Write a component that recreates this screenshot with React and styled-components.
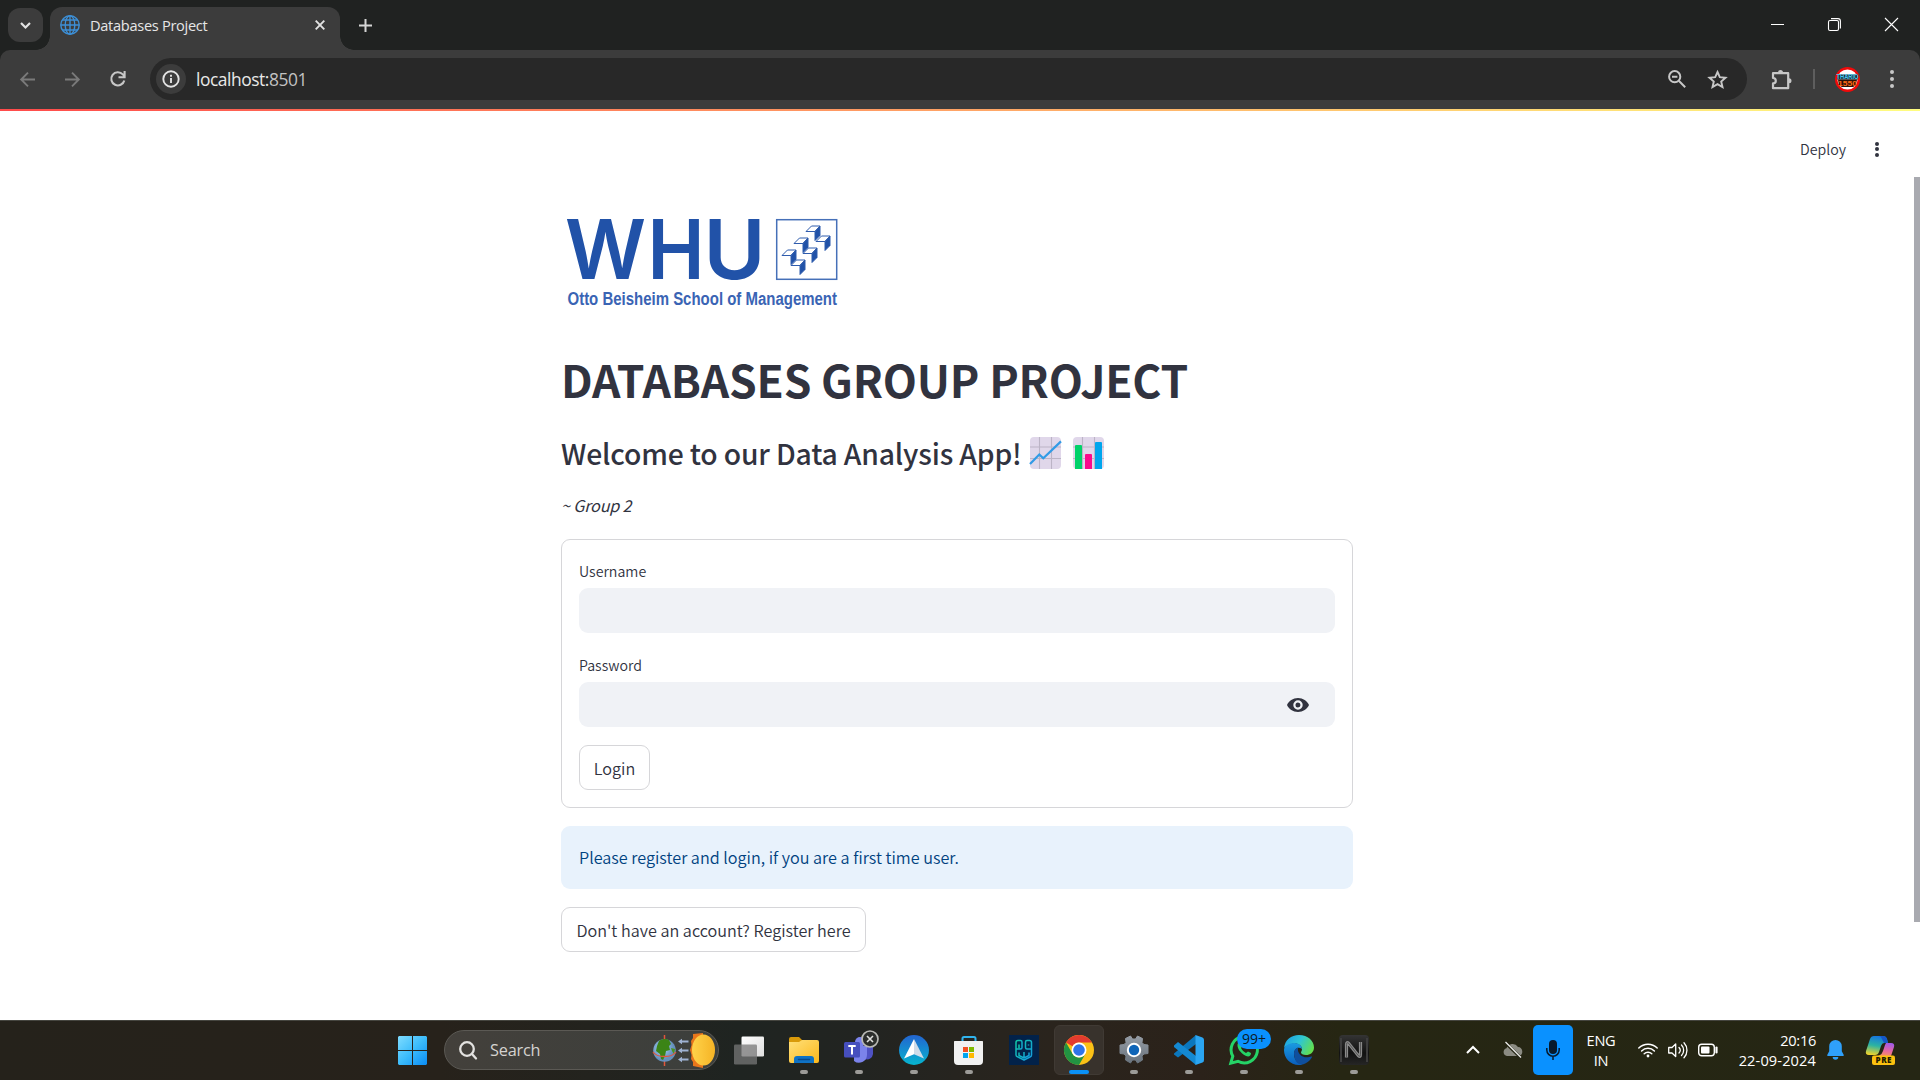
import React from "react";
import styled, { createGlobalStyle, css } from "styled-components";

const sourceFont = `"Source Sans Pro", "Noto Sans CJK JP", "Open Sans", sans-serif`;
const systemFont = `"Segoe UI", "Open Sans", "Noto Sans", sans-serif`;

const GlobalStyle = createGlobalStyle`
  *, *::before, *::after { box-sizing: border-box; }
  body { margin: 0; background: #fff; overflow: hidden; }
  svg { display: block; flex: none; overflow: visible; }
  button { font: inherit; color: inherit; background: none; border: 0; padding: 0; margin: 0; }
  h1, h3, p { margin: 0; }
`;

const Screen = styled.div`
  display: flex;
  flex-direction: column;
  width: 1920px;
  height: 1080px;
  overflow: hidden;
  background: #fff;
`;

/* ---------- browser ---------- */

const TabStrip = styled.header`
  display: flex;
  height: 50px;
  padding-left: 8px;
  background: #202221;
  font-family: ${systemFont};
`;

const TabSearch = styled.button`
  display: grid;
  place-items: center;
  width: 35px;
  height: 34px;
  margin: 8px 7px 0 0;
  border-radius: 12px;
  background: #3c3c3c;
`;

const Tab = styled.div`
  position: relative;
  display: flex;
  align-items: center;
  width: 290px;
  height: 43px;
  margin-top: 7px;
  padding: 0 15px 7px 10px;
  border-radius: 12px 12px 0 0;
  background: #3c3c3c;
  &::before, &::after {
    content: "";
    position: absolute;
    bottom: 0;
    width: 14px;
    height: 14px;
  }
  &::before { left: -14px; background: radial-gradient(circle at 0 0, transparent 13.5px, #3c3c3c 14px); }
  &::after { right: -14px; background: radial-gradient(circle at 100% 0, transparent 13.5px, #3c3c3c 14px); }
`;

const TabTitle = styled.span`
  flex: 1;
  margin-left: 10px;
  font-size: 14.6px;
  line-height: 20px;
  letter-spacing: -0.3px;
  color: #e6e6e6;
  white-space: nowrap;
`;

const NewTab = styled.button`
  display: grid;
  place-items: start;
  width: 13px;
  height: 13px;
  margin: 19px 0 0 19px;
`;

const WindowControls = styled.div`
  display: flex;
  gap: 44px;
  margin-left: auto;
  padding: 18px 22px 0 0;
`;

const ToolbarBack = styled.div`
  background: #202221;
`;

const Toolbar = styled.div`
  display: flex;
  align-items: center;
  height: 59px;
  padding: 0 0 1px 20px;
  border-radius: 10px 10px 0 0;
  background: #3c3c3c;
  font-family: ${systemFont};
`;

const NavButtons = styled.div`
  display: flex;
  align-items: center;
  gap: 30px;
  width: 130px;
`;

const Omnibox = styled.div`
  display: flex;
  align-items: center;
  width: 1597px;
  height: 42px;
  padding: 0 20px 0 6px;
  border-radius: 21px;
  background: #282828;
`;

const SiteInfo = styled.span`
  display: grid;
  place-items: center;
  width: 30px;
  height: 30px;
  margin-right: 10px;
  border-radius: 50%;
  background: #3c3c3c;
`;

const Address = styled.span`
  flex: 1;
  font-size: 17.4px;
  line-height: 24px;
  letter-spacing: -0.45px;
  color: #e8e8e8;
`;

const Port = styled.span`
  color: #c2c2c2;
`;

const OmniActions = styled.div`
  display: flex;
  align-items: center;
  gap: 22px;
`;

const ToolbarActions = styled.div`
  display: flex;
  align-items: center;
  margin-left: 24px;
`;

const Divider = styled.span`
  width: 2px;
  height: 20px;
  margin: 0 20px 0 21px;
  background: #5e5e5e;
`;

const MenuDots = styled.span`
  display: flex;
  flex-direction: column;
  gap: ${(p) => p.$gap}px;
  margin-left: ${(p) => p.$before}px;
  &::before, &::after, i {
    content: "";
    width: 4px;
    height: 4px;
    border-radius: 50%;
    background: ${(p) => p.$color};
  }
`;

/* ---------- page ---------- */

const Viewport = styled.div`
  position: relative;
  display: flex;
  flex-direction: column;
  height: 911px;
  background: #fff;
  font-family: ${sourceFont};
  font-weight: 350;
  color: #31333f;
`;

const Decoration = styled.div`
  height: 2px;
  background: linear-gradient(90deg, #ff4b4b, #fffd80);
`;

const AppHeader = styled.div`
  display: flex;
  align-items: center;
  justify-content: flex-end;
  height: 66px;
  padding: 10px 41px 0 0;
  font-size: 14.2px;
  line-height: 20px;
`;

const DeployLabel = styled.span`
  padding-bottom: 1px;
`;

const ScrollThumb = styled.div`
  position: absolute;
  top: 68px;
  right: 0;
  width: 6px;
  height: 745px;
  background: #a9aab0;
`;

const Main = styled.main`
  display: flex;
  flex-direction: column;
  align-items: flex-start;
  width: 792px;
  margin: 23px 0 0 561px;
`;

const Title = styled.h1`
  margin-top: 27px;
  font-size: 44.4px;
  font-weight: 700;
  line-height: 60px;
  letter-spacing: -0.18px;
  white-space: nowrap;
`;

const Subtitle = styled.h3`
  display: flex;
  align-items: center;
  margin-top: 24px;
  font-size: 28.3px;
  font-weight: 500;
  line-height: 40px;
  letter-spacing: -0.17px;
  white-space: nowrap;
`;

const Emoji = styled.span`
  margin-left: ${(p) => p.$gap}px;
`;

const Byline = styled.p`
  margin-top: 18px;
  font-size: 16.2px;
  font-style: italic;
  line-height: 28px;
  font-weight: 400;
  letter-spacing: -0.2px;
`;

const Form = styled.form`
  display: flex;
  flex-direction: column;
  align-items: stretch;
  width: 100%;
  height: 269px;
  margin-top: 20px;
  padding: 17px;
  border: 1px solid #d6d6d9;
  border-radius: 9px;
`;

const Label = styled.label`
  height: ${(p) => p.$height}px;
  margin-top: ${(p) => p.$top || 0}px;
  font-size: 14.2px;
  line-height: 28px;
`;

const Field = styled.div`
  display: flex;
  align-items: center;
  justify-content: flex-end;
  height: 45px;
  padding-right: 26px;
  border-radius: 9px;
  background: #f0f2f6;
`;

const Button = styled.button`
  align-self: flex-start;
  width: ${(p) => p.$width}px;
  height: 45px;
  margin-top: 18px;
  border: 1px solid #d6d6d9;
  border-radius: 9px;
  background: #fff;
  font-size: 16.2px;
  line-height: 28px;
  text-align: center;
  white-space: nowrap;
`;

const Notice = styled.div`
  width: 100%;
  height: 63px;
  margin-top: 18px;
  padding: 17px 18px;
  border-radius: 9px;
  background: #e8f2fc;
  color: #004280;
  font-size: 16.2px;
  line-height: 28px;
`;

/* ---------- taskbar ---------- */

const Taskbar = styled.footer`
  display: flex;
  align-items: center;
  height: 60px;
  padding: 0 13px 0 398px;
  box-shadow: inset 0 1px 0 #45453f;
  background: linear-gradient(90deg, #25221b 0, #27221b 440px, #1f2421 740px, #222421 860px, #2a241d 1050px, #2b221a 1200px, #262613 1340px, #252614 1920px);
  font-family: ${systemFont};
  color: #fff;
`;

const SearchBox = styled.div`
  display: flex;
  align-items: center;
  width: 275px;
  height: 40px;
  margin: 0 3px 0 17px;
  padding: 0 3px 0 14px;
  border: 1px solid #5b5954;
  border-radius: 20px;
  background: linear-gradient(90deg, #43403b, #3c3f3c);
`;

const SearchLabel = styled.span`
  flex: 1;
  margin-left: 13px;
  color: #d5d3d0;
  font-size: 16.3px;
  line-height: 22px;
  letter-spacing: -0.2px;
`;

const AppSlot = styled.div`
  position: relative;
  display: flex;
  align-items: center;
  width: 55px;
  height: 60px;
  padding-left: 12px;
  ${(p) =>
    p.$running &&
    css`
      &::after {
        content: "";
        position: absolute;
        left: ${p.$active ? 17 : 23}px;
        bottom: 6px;
        width: ${p.$active ? 20 : 8}px;
        height: 4px;
        border-radius: 2px;
        background: ${p.$active ? "#0a91f5" : "#9c9b98"};
      }
    `}
  ${(p) =>
    p.$active &&
    css`
      &::before {
        content: "";
        position: absolute;
        inset: 5px 3px 5px 2px;
        border: 1px solid #403a34;
        border-radius: 6px;
        background: #38322c;
      }
    `}
  svg { position: relative; }
`;

const CountBadge = styled.span`
  position: absolute;
  left: 20px;
  top: 9px;
  width: 34px;
  height: 20px;
  border-radius: 10px;
  background: #0a91ff;
  color: #0c1a26;
  font-size: 14px;
  line-height: 19px;
  text-align: center;
`;

const Tray = styled.div`
  display: grid;
  grid-template-columns: 40px 40px 40px 56px 98px 89px 38px 53px;
  align-items: center;
  justify-items: center;
  margin-left: auto;
`;

const MicButton = styled.div`
  display: grid;
  place-items: center;
  width: 40px;
  height: 50px;
  border-radius: 5px;
  background: #0a91ff;
`;

const TrayText = styled.div`
  justify-self: ${(p) => p.$align};
  padding-bottom: 1px;
  text-align: ${(p) => p.$align};
  font-size: 14.6px;
  line-height: 20px;
  letter-spacing: -0.3px;
  white-space: nowrap;
`;

const DateText = styled.span`
  display: block;
  letter-spacing: 0.12px;
`;

const StatusGroup = styled.div`
  display: flex;
  gap: 10px;
`;

/* ---------- drawings ---------- */

const Stroke = ({ w, h, color = "#c7c7c7", width = 2, children, ...rest }) => (
  <svg width={w} height={h} viewBox={`0 0 ${w} ${h}`} fill="none" stroke={color} strokeWidth={width} {...rest}>
    {children}
  </svg>
);

const GlobeIcon = () => (
  <Stroke w={20} h={20} color="#3d8fd6" width={1.4}>
    <circle cx="10" cy="10" r="9.2" />
    <ellipse cx="10" cy="10" rx="4.8" ry="9.2" />
    <path d="M10 .8v18.4M.8 10h18.4M2.6 5h14.8M2.6 15h14.8" />
  </Stroke>
);

const WhuLogo = () => (
  <svg width="292" height="122" viewBox="0 0 292 122" fill="#2152a8">
    <g fontFamily="Inter, 'Liberation Sans', sans-serif" fontWeight="600" fontSize="83">
      <text x="4" y="79.3" textLength="81" lengthAdjust="spacingAndGlyphs">W</text>
      <text x="86.5" y="79.3" textLength="57" lengthAdjust="spacingAndGlyphs">H</text>
      <text x="142.5" y="79.3" textLength="62" lengthAdjust="spacingAndGlyphs">U</text>
    </g>
    <text x="6.500" y="105" fontFamily="'Liberation Sans Narrow', 'Liberation Sans', sans-serif" fontWeight="700" fontSize="18.3" fill="#3a64b4" textLength="269.500" lengthAdjust="spacingAndGlyphs">
      Otto Beisheim School of Management
    </text>
    <rect x="215.7" y="19.7" width="60" height="59.6" fill="#fff" stroke="#4670b8" strokeWidth="1.5" />
    <g stroke="#2f5cad" strokeWidth="1" strokeLinejoin="round">
      {[[221, 50], [230, 60], [233, 38], [242, 48], [245, 26], [255, 36]].map(([x, y]) => (
        <g key={`${x}-${y}`} transform={`translate(${x} ${y})`}>
          <path d="M0 5.5 5.5 0H14L9 5.5Z" fill="#fff" />
          <path d="M9 5.5 14 0V9.5L9 14.5Z" fill="#2152a8" />
        </g>
      ))}
    </g>
  </svg>
);

const ChartTile = () => (
  <>
    <rect width="31" height="32" rx="4" fill="#e0d7ea" />
    <path d="M0 10h31M0 21.5h31M9.5 0v32M21.5 0v32" stroke="#bcb4c6" strokeWidth="1.1" />
  </>
);

const LineChartEmoji = () => (
  <svg width="31" height="32" viewBox="0 0 31 32">
    <ChartTile />
    <path d="m0 27 9.3-9.5 4 3.8L31 4.4" fill="none" stroke="#329be6" strokeWidth="2.2" />
  </svg>
);

const BarChartEmoji = () => (
  <svg width="31" height="32" viewBox="0 0 31 32">
    <ChartTile />
    <path d="M2 9q0-1 1-1h5q1 0 1 1v23H2Z" fill="#00d26a" />
    <path d="M12 18q0-1 1-1h5q1 0 1 1v14h-7Z" fill="#fa0a8c" />
    <path d="M22 6q0-1 1-1h5q1 0 1 1v26h-7Z" fill="#00a6ed" />
  </svg>
);

const EyeIcon = () => (
  <svg width="22" height="14" viewBox="0 0 22 14" fill="#31333f">
    <path fillRule="evenodd" d="M11 0C6 0 1.8 2.9 0 7c1.8 4.1 6 7 11 7s9.2-2.9 11-7C20.200 2.900 16 0 11 0Zm0 11.700a4.700 4.700 0 1 1 0-9.400 4.700 4.700 0 0 1 0 9.400Zm0-7.200a2.500 2.500 0 1 0 0 5 2.500 2.500 0 0 0 0-5Z" />
  </svg>
);

const Avatar = () => (
  <svg width="25" height="25" viewBox="0 0 25 25">
    <circle cx="12.500" cy="12.500" r="11.300" fill="#fff" stroke="#f00a0a" strokeWidth="2.400" />
    <path d="M3 7.500h19l1 5H2Z" fill="#1d2b33" />
    <path d="M3 12.500h19l-1 6-3 1.500H7L4 18.500Z" fill="#2a1208" />
    <g fontFamily="'Liberation Sans', sans-serif" fontWeight="700" stroke="none">
      <text x="1.500" y="12.200" fontSize="6.500" fill="#45c8f0" textLength="22" lengthAdjust="spacingAndGlyphs">THARIO</text>
      <text x="3" y="19.300" fontSize="8" fill="#ff6a13" textLength="19" lengthAdjust="spacingAndGlyphs">1550</text>
    </g>
  </svg>
);

const StartIcon = () => (
  <svg width="29" height="29" viewBox="0 0 29 29">
    <defs>
      <linearGradient id="start" gradientUnits="userSpaceOnUse" x1="0" y1="0" x2="29" y2="29">
        <stop stopColor="#7fdcff" /><stop offset=".5" stopColor="#3cbcfb" /><stop offset="1" stopColor="#0a8cf5" />
      </linearGradient>
    </defs>
    <path fill="url(#start)" d="M1 0h13v14H0V1ZM15 0h13l1 1v13H15ZM0 15h14v14H1l-1-1ZM15 15h14v13l-1 1H15Z" />
  </svg>
);

const SeasonArt = () => (
  <svg width="63" height="34" viewBox="0 0 63 34">
    <defs>
      <radialGradient id="earth" cx=".4" cy=".4"><stop stopColor="#a8d5f5" /><stop offset="1" stopColor="#6590bd" /></radialGradient>
      <linearGradient id="sun" x1="0" x2="1"><stop stopColor="#ffd34a" /><stop offset="1" stopColor="#f5b325" /></linearGradient>
    </defs>
    <path d="M12.500 2v31" stroke="#e2563b" strokeWidth="1.500" />
    <circle cx="12.500" cy="17.500" r="11.300" fill="url(#earth)" />
    <path d="M7 8c4-3 8-2 10-1l2 4-2 2 1 4-4 1-1 5-2 4-2-1-1-5-4-3 1-5Z" fill="#3b8416" />
    <path d="m19 15 4 1-1 5-2-3Z" fill="#4c9220" />
    <path d="M1 19c4 6 19 6 23 0" fill="none" stroke="#e2563b" strokeWidth="1.300" />
    {[8.500, 17.500, 26.500].map((y) => (
      <path key={y} d={`M26 ${y}l4-2.800v1.700h6.500v2.200H30v1.700Z`} fill="#9eb2d2" />
    ))}
    <path d="m51 0-10 1v4l-2 3 .500 4-1.500 5 1.500 5-.500 4 2 3v4l10 2Z" fill="#e8761b" />
    <ellipse cx="51.500" cy="17" rx="11.500" ry="15.500" fill="url(#sun)" />
  </svg>
);

const TaskViewIcon = () => (
  <svg width="30" height="29" viewBox="0 0 30 29">
    <defs><linearGradient id="tv" x1="0" y1="0" x2="1" y2="1"><stop stopColor="#fff" /><stop offset="1" stopColor="#dedede" /></linearGradient></defs>
    <rect x="7.500" y="0.500" width="22.500" height="20" rx="1.300" fill="url(#tv)" />
    <rect y="8.500" width="23" height="20" rx="1.300" fill="#777" fillOpacity=".75" />
  </svg>
);

const FolderIcon = () => (
  <svg width="30" height="30" viewBox="0 0 30 30">
    <defs><linearGradient id="fold" x1="0" y1="0" x2="1" y2="1"><stop stopColor="#ffe07a" /><stop offset="1" stopColor="#fcb81b" /></linearGradient></defs>
    <path d="M0 4q0-2 2-2h8l3 3v5H0Z" fill="#d99a0a" />
    <path d="M0 7h10l3-2h15q2 0 2 2v19q0 2-2 2H2q-2 0-2-2Z" fill="url(#fold)" />
    <path d="M5 28v-4q0-3 3-3h14q3 0 3 3v4Z" fill="#0f72c4" />
    <path d="M9.500 24.500h11" stroke="#084a8c" strokeWidth="1.500" strokeLinecap="round" />
  </svg>
);

const TeamsIcon = () => (
  <svg width="30" height="30" viewBox="0 0 30 30">
    <path d="M19 12h10v7a6 6 0 0 1-8 5Z" fill="#4f52c4" />
    <circle cx="16" cy="7" r="5" fill="#7b83eb" />
    <path d="M10 11h13v9a8 8 0 0 1-13 6Z" fill="#7b83eb" />
    <rect y="7" width="16" height="15.500" rx="1.500" fill="#464fbe" />
    <path d="M4.300 11h7.400M8 11v8.500" stroke="#fff" strokeWidth="2" />
    <circle cx="26" cy="4" r="8" fill="#2c2e2c" stroke="#b9b9b5" strokeWidth="1.700" />
    <path d="m23 1 6 6m0-6-6 6" stroke="#e0e0dd" strokeWidth="1.600" />
  </svg>
);

const ArrowAppIcon = () => (
  <svg width="30" height="30" viewBox="0 0 30 30">
    <defs><linearGradient id="arrow" x1="0" y1="0" x2="0" y2="1"><stop stopColor="#2364d0" /><stop offset="1" stopColor="#06b5cf" /></linearGradient></defs>
    <circle cx="15" cy="15" r="15" fill="url(#arrow)" />
    <path d="M15 4 5 23.500l10-4.300Z" fill="#fff" />
    <path d="m15 4 10 19.500-10-4.300Z" fill="#cfdce9" />
  </svg>
);

const StoreIcon = () => (
  <svg width="30" height="30" viewBox="0 0 30 30">
    <path d="M8.500 7V3.500q0-1.500 1.500-1.500h10q1.500 0 1.500 1.500V7" fill="none" stroke="#30b4ee" strokeWidth="2" />
    <path d="M0 6.500Q0 6 .500 6h28q.500 0 .500.500V26q0 4-4 4H4q-4 0-4-4Z" fill="#f1f1f1" />
    <path d="M9 12h5v5H9Z" fill="#f25022" /><path d="M15 12h5v5h-5Z" fill="#7fba00" />
    <path d="M9 18h5v5H9Z" fill="#00a4ef" /><path d="M15 18h5v5h-5Z" fill="#ffb900" />
  </svg>
);

const PgIcon = () => (
  <svg width="30" height="30" viewBox="0 0 30 30">
    <defs><linearGradient id="pg" x1="0" y1="0" x2="1" y2="1"><stop stopColor="#10c9a4" /><stop offset="1" stopColor="#159ae0" /></linearGradient></defs>
    <rect width="30" height="30" fill="#02224a" />
    <g fill="none" stroke="url(#pg)" strokeWidth="1.500" strokeLinejoin="round">
      <path d="M7 20V7.500q0-2 2-2h2.500q1.500 0 1.500 1.500v5.500q0 1.500-1.500 1.500H7" />
      <path d="M22.500 14H18q-1.500 0-1.500-1.500V7q0-1.500 1.500-1.500h2.500q2 0 2 2V20q0 1.500-1.500 2l-6 3-6-3Q7 21.500 7 20" />
      <path d="M10 17.500v3l5 2.500 5-2.500v-3M15 17v6M10 9.500v4M19.500 9.500v1" />
    </g>
  </svg>
);

const ChromeIcon = () => (
  <svg width="30" height="30" viewBox="0 0 48 48">
    <circle cx="24" cy="24" r="24" fill="#fbc116" />
    <path d="M3.200 12A24 24 0 0 1 44.800 12H24a12 12 0 0 0-10.400 6Z" fill="#e33b2e" />
    <path d="M3.200 12A24 24 0 0 0 24 48l10.400-18A12 12 0 0 1 13.600 30Z" fill="#229342" />
    <circle cx="24" cy="24" r="12" fill="#fff" />
    <circle cx="24" cy="24" r="9.300" fill="#2f74e8" />
  </svg>
);

const SettingsIcon = () => (
  <svg width="30" height="30" viewBox="0 0 30 30">
    <defs><linearGradient id="gear" x1="0" y1="0" x2="0" y2="1"><stop stopColor="#959ca5" /><stop offset="1" stopColor="#69737d" /></linearGradient></defs>
    <path d="m11.500 1 2 3h3l2-3 5 2.500-.500 4 2 2 4 .500v8.500l-4 .500-2 2 .500 4-5 3-2-3h-3l-2 3-5-3 .500-4-2-2-4-.500V10l4-.500 2-2-.500-4Z" fill="url(#gear)" strokeLinejoin="round" stroke="url(#gear)" />
    <circle cx="15" cy="15" r="7.200" fill="#fff" /><circle cx="15" cy="15" r="5.200" fill="#0f65b8" />
  </svg>
);

const CodeIcon = () => (
  <svg width="30" height="30" viewBox="0 0 30 30">
    <path d="M22 0v9L4 22.500 0 19.500v-1Z" fill="#0b77bd" />
    <path d="m0 10.500 4-3.500 18 14v9L0 12Z" fill="#1489d2" />
    <path d="m21.500 0 7 2.500Q30 3 30 5v20q0 2-1.500 2.500l-7 2.500Z" fill="#2ba5f2" />
  </svg>
);

const WhatsAppIcon = () => (
  <svg width="30" height="30" viewBox="0 0 30 30" fill="none" stroke="#25d366" strokeWidth="3">
    <path d="m1.800 28.200 2-7A13.200 13.200 0 1 1 9 26.300Z" />
    <path d="M9 8c-2 4 2 10 8 13 3 1 5 0 5-3l-3-1.500-2 1.500c-2-1-4-3-5-5L13.500 11 12 8Z" fill="#25d366" stroke="none" />
  </svg>
);

const EdgeIcon = () => (
  <svg width="30" height="30" viewBox="0 0 30 30">
    <defs>
      <linearGradient id="edgeTop" x1="0" x2="1" y1=".2" y2=".6"><stop stopColor="#1c9fe4" /><stop offset=".5" stopColor="#2fc6d2" /><stop offset="1" stopColor="#63df4e" /></linearGradient>
      <linearGradient id="edgeLow" x1="0" x2="0" y1="0" y2="1"><stop stopColor="#1a9be2" /><stop offset="1" stopColor="#0a5ebc" /></linearGradient>
    </defs>
    <path d="M0 13C1 5 7 0 15 0c9 0 15 6 15 12.500 0 5-4 7.500-8 7.500-3 0-5-1-5-2.500 0-1 1-1.500 1-3.500 0-3-3-5.500-7-5.500C6 8.500 2 11 0 13Z" fill="url(#edgeTop)" />
    <path d="M0 15c0-4 5-7 10-7 5 0 8 3 8 6-4-3-8 0-8 5 0 6 5 10.500 9 10.500-1.500.500-2.500.500-4 .500C6 30 0 23 0 15Z" fill="url(#edgeLow)" />
    <path d="M10 18c0-3 2-5 4-5.500-1 6 4 10.500 10 9.800 2-.3 3.500-1 4-.800.500.500-4 8-11 8-4 0-7-5-7-11.500Z" fill="#0f4f9e" />
  </svg>
);

const NIcon = () => (
  <svg width="30" height="30" viewBox="0 0 30 30">
    <defs><linearGradient id="nbg" x1="0" y1="0" x2="0" y2="1"><stop stopColor="#343434" /><stop offset=".6" stopColor="#111" /><stop offset="1" stopColor="#262626" /></linearGradient></defs>
    <rect width="30" height="30" rx="4" fill="url(#nbg)" />
    <path d="M2 3v24M28 3v24" stroke="#3d3d3d" strokeWidth="2" />
    <path d="M7.500 22.500V9.500q0-3 2.300-1l9.400 12q2.300 2 2.300-1V7" fill="none" stroke="#8a8a8a" strokeWidth="3.200" />
    <path d="M7.500 22.500V9.500q0-3 2.300-1l9.400 12q2.300 2 2.300-1V7" fill="none" stroke="#555" strokeWidth="1" />
  </svg>
);

const CloudOffIcon = () => (
  <svg width="20" height="16" viewBox="0 0 20 16">
    <path d="M4 14a4 4 0 0 1-.500-7.800A6.500 6.500 0 0 1 15 5a4.600 4.600 0 0 1 1 9Z" fill="#8b8b82" />
    <path d="m1.500 0 16 15.500" stroke="#252614" strokeWidth="3" />
    <path d="m2.500 0 15.500 15.500" stroke="#f0f0ee" strokeWidth="1.300" />
  </svg>
);

const MicIcon = () => (
  <svg width="14" height="20" viewBox="0 0 14 20">
    <rect x="3" width="8" height="14" rx="4" fill="#07192b" />
    <path d="M.800 8v2a6.200 6.200 0 0 0 12.400 0V8M7 16v4" fill="none" stroke="#07192b" strokeWidth="1.500" />
  </svg>
);

const WifiIcon = () => (
  <Stroke w={20} h={16} color="#fff" width={1.500} strokeLinecap="round">
    <path d="M.800 6a13 13 0 0 1 18.400 0M3.600 9a9 9 0 0 1 12.800 0M6.200 11.800a5.400 5.400 0 0 1 7.600 0" />
    <circle cx="10" cy="14" r="1.400" fill="#fff" stroke="none" />
  </Stroke>
);

const SpeakerIcon = () => (
  <Stroke w={20} h={16} color="#fff" width={1.300} strokeLinejoin="round" strokeLinecap="round">
    <path d="M.700 5.500H4L7.700 2v12.500L4 11H.700Z" />
    <path d="M11 5.500a4 4 0 0 1 0 5.500M13.500 3a7.500 7.500 0 0 1 0 10.500M16 .800a11 11 0 0 1 0 15" />
  </Stroke>
);

const BatteryIcon = () => (
  <Stroke w={20} h={16} color="#fff" width={1.400}>
    <rect x=".700" y="2.200" width="15.600" height="11.600" rx="3" />
    <rect x="3" y="4.500" width="8.500" height="7" rx="1" fill="#fff" stroke="none" />
    <path d="M18.500 5.500v5" strokeWidth="2.200" strokeLinecap="round" />
  </Stroke>
);

const BellIcon = () => (
  <svg width="17" height="20" viewBox="0 0 17 20" fill="#2fa0fa">
    <path d="M8.500 0A6.300 6.300 0 0 1 14.800 6.300v5l2 3.700q.300 1-.800 1H1q-1.100 0-.800-1l2-3.700v-5A6.300 6.300 0 0 1 8.500 0ZM5.700 17h5.600a2.800 2.800 0 0 1-5.600 0Z" />
  </svg>
);

const CopilotIcon = () => (
  <svg width="29" height="29" viewBox="0 0 29 29">
    <defs>
      <linearGradient id="coA" x1=".5" y1="0" x2=".3" y2="1"><stop stopColor="#1676e0" /><stop offset=".5" stopColor="#2bb3a2" /><stop offset="1" stopColor="#f0d32c" /></linearGradient>
      <linearGradient id="coB" x1=".6" y1="0" x2=".4" y2="1"><stop stopColor="#a05ae8" /><stop offset=".6" stopColor="#e868a0" /><stop offset="1" stopColor="#f79060" /></linearGradient>
    </defs>
    <path d="M8 0h9q3 0 4 3l1 4h-4q-2 0-3 3l-2 6q-1 3-4 3H3q-4 0-3-4L4 3q1-3 4-3Z" fill="url(#coA)" />
    <path d="M13 0h4q3 0 4 3l1 4h-4l-2-4q-1-3-3-3Z" fill="#1557c8" />
    <path d="M20 7h5q4 0 3 4l-3 9H12l2-1q2-1 3-4l2-6Z" fill="url(#coB)" />
    <rect x="6" y="19.500" width="23" height="9.500" rx="2" fill="#fcc10f" />
    <text x="9.500" y="27.200" fontFamily="'Open Sans', sans-serif" fontWeight="800" fontSize="8" fill="#241c00" textLength="16" lengthAdjust="spacing">PRE</text>
  </svg>
);

const apps = [
  { name: "task-view", Icon: TaskViewIcon },
  { name: "files", Icon: FolderIcon, running: true },
  { name: "teams", Icon: TeamsIcon, running: true },
  { name: "arrow", Icon: ArrowAppIcon, running: true },
  { name: "store", Icon: StoreIcon, running: true },
  { name: "pg", Icon: PgIcon },
  { name: "chrome", Icon: ChromeIcon, running: true, active: true },
  { name: "settings", Icon: SettingsIcon, running: true },
  { name: "code", Icon: CodeIcon, running: true },
  { name: "whatsapp", Icon: WhatsAppIcon, running: true, badge: "99+" },
  { name: "edge", Icon: EdgeIcon, running: true },
  { name: "n", Icon: NIcon, running: true },
];

const BrowserChrome = () => (
  <>
    <TabStrip>
      <TabSearch><Stroke w={11} h={7} color="#e3e3e3" width={2.200}><path d="m1 1 4.500 4.500L10 1" /></Stroke></TabSearch>
      <Tab>
        <GlobeIcon />
        <TabTitle>Databases Project</TabTitle>
        <Stroke w={10} h={10} color="#e3e3e3" width={1.900}><path d="m.700.700 8.600 8.600m0-8.600L.700 9.300" /></Stroke>
      </Tab>
      <NewTab><Stroke w={13} h={13} color="#d5d5d5"><path d="M6.500 0v13M0 6.500h13" /></Stroke></NewTab>
      <WindowControls>
        <Stroke w={13} h={13} color="#fff" width={1}><path d="M0 6.500h13" /></Stroke>
        <Stroke w={13} h={13} color="#fff" width={1.100}>
          <rect x=".500" y="2.500" width="10" height="10" rx="1.500" />
          <path d="M3 .600h7q2.400 0 2.400 2.400v7.500" />
        </Stroke>
        <Stroke w={13} h={13} color="#fff" width={1.100}><path d="m0 0 13 13M13 0 0 13" /></Stroke>
      </WindowControls>
    </TabStrip>
    <ToolbarBack>
      <Toolbar>
        <NavButtons>
          <Stroke w={15} h={15} color="#7a7a7a" width={1.900}><path d="M15 7.500H1.500M8 .700 1.200 7.500 8 14.300" /></Stroke>
          <Stroke w={15} h={15} color="#7a7a7a" width={1.900}><path d="M0 7.500h13.500M7 .700l6.800 6.800L7 14.300" /></Stroke>
          <Stroke w={16} h={16} width={2.100}><path d="M14.300 9.500A6.600 6.600 0 1 1 12.800 3.400L14.500 5.200M14.600 0v6.200H8.500" /></Stroke>
        </NavButtons>
        <Omnibox>
          <SiteInfo>
            <Stroke w={18} h={18} color="#e3e3e3" width={1.900}>
              <circle cx="9" cy="9" r="7.700" /><path d="M9 8v5M9 4.800v2" />
            </Stroke>
          </SiteInfo>
          <Address>localhost:<Port>8501</Port></Address>
          <OmniActions>
            <Stroke w={18} h={18}><circle cx="6.700" cy="6.700" r="5.600" /><path d="m10.800 10.800 6.400 6.400M4 6.700h5.400" /></Stroke>
            <Stroke w={19} h={19} width={1.900}><path d="m9.500 2 2.300 5.200 5.700.500-4.300 3.800 1.300 5.600-5-3-5 3 1.300-5.600L1.500 7.700l5.700-.500Z" /></Stroke>
          </OmniActions>
        </Omnibox>
        <ToolbarActions>
          <Stroke w={21} h={21} width={2.200}>
            <path d="M2 4.200h15.200v15H2v-4.800q2.800 0 2.800-2.700T2 9Z" strokeLinejoin="round" />
            <path d="M7 3.500a2.500 2.500 0 0 1 5 0ZM18 9.300a2.500 2.500 0 0 1 0 5Z" fill="#c7c7c7" stroke="none" />
          </Stroke>
          <Divider />
          <Avatar />
          <MenuDots $gap={3} $before={30} $color="#c7c7c7"><i /></MenuDots>
        </ToolbarActions>
      </Toolbar>
    </ToolbarBack>
  </>
);

const LoginPage = () => (
  <Viewport>
    <Decoration />
    <AppHeader>
      <DeployLabel>Deploy</DeployLabel>
      <MenuDots $gap={1.500} $before={29} $color="#31333f"><i /></MenuDots>
    </AppHeader>
    <Main>
      <WhuLogo />
      <Title>DATABASES GROUP PROJECT</Title>
      <Subtitle>
        Welcome to our Data Analysis App!
        <Emoji $gap={8}><LineChartEmoji /></Emoji>
        <Emoji $gap={12.500}><BarChartEmoji /></Emoji>
      </Subtitle>
      <Byline>~ Group 2</Byline>
      <Form>
        <Label $height={31}>Username</Label>
        <Field />
        <Label $height={32} $top={18}>Password</Label>
        <Field><EyeIcon /></Field>
        <Button type="button" $width={71}>Login</Button>
      </Form>
      <Notice>Please register and login, if you are a first time user.</Notice>
      <Button type="button" $width={305}>Don't have an account? Register here</Button>
    </Main>
    <ScrollThumb />
  </Viewport>
);

const DesktopTaskbar = () => (
  <Taskbar>
    <StartIcon />
    <SearchBox>
      <Stroke w={18} h={19} color="#e3e2e0" width={2.300} strokeLinecap="round"><circle cx="8" cy="8" r="6.800" /><path d="m13 13 4 4.500" /></Stroke>
      <SearchLabel>Search</SearchLabel>
      <SeasonArt />
    </SearchBox>
    {apps.map(({ name, Icon, running, active, badge }) => (
      <AppSlot key={name} $running={running} $active={active}>
        <Icon />
        {badge && <CountBadge>{badge}</CountBadge>}
      </AppSlot>
    ))}
    <Tray>
      <Stroke w={14} h={8} color="#fff"><path d="m1 7 6-6 6 6" /></Stroke>
      <CloudOffIcon />
      <MicButton><MicIcon /></MicButton>
      <TrayText $align="center">ENG<br />IN</TrayText>
      <StatusGroup><WifiIcon /><SpeakerIcon /><BatteryIcon /></StatusGroup>
      <TrayText $align="right">20:16<DateText>22-09-2024</DateText></TrayText>
      <BellIcon />
      <CopilotIcon />
    </Tray>
  </Taskbar>
);

export default function App() {
  return (
    <Screen>
      <GlobalStyle />
      <BrowserChrome />
      <LoginPage />
      <DesktopTaskbar />
    </Screen>
  );
}
